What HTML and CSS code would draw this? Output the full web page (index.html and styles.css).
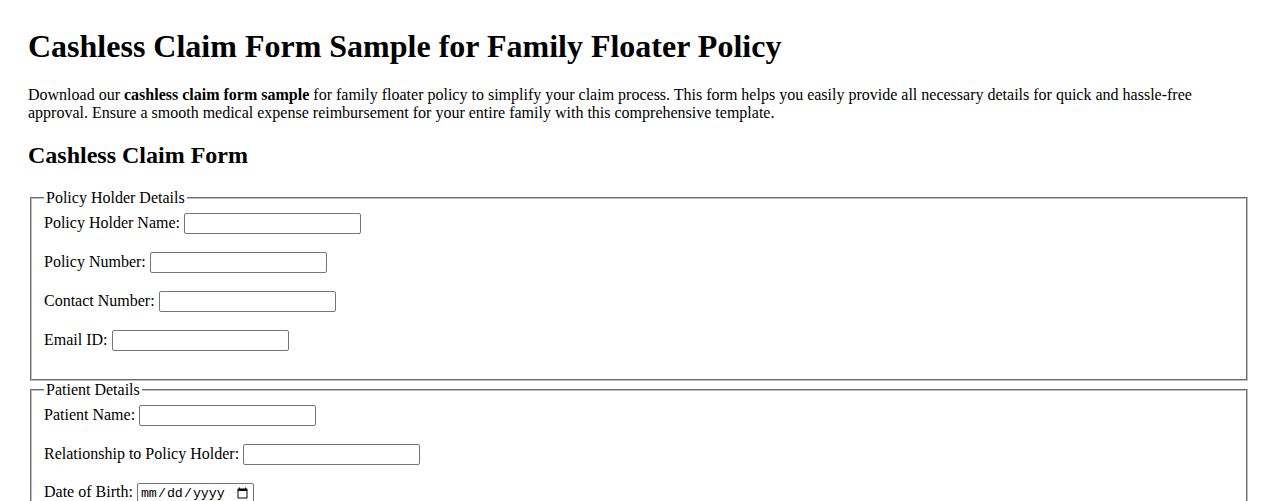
FILE: index.html
```html
<!DOCTYPE html>
<html lang="en">
<head>
<meta charset="utf-8">
<title>Cashless Claim Form Sample for Family Floater Policy</title>
<link rel="stylesheet" href="styles.css">
</head>
<body>
<h1 class="title">Cashless Claim Form Sample for Family Floater Policy</h1>
<p class="intro">Download our <strong>cashless claim form sample</strong> for family floater policy to simplify your claim process. This form helps you easily provide all necessary details for quick and hassle-free approval. Ensure a smooth medical expense reimbursement for your entire family with this comprehensive template.</p>
<h2 class="subtitle">Cashless Claim Form</h2>
<form class="claim-form">
  <fieldset class="group">
    <legend class="group-title">Policy Holder Details</legend>
    <div class="field"><label for="ph-name">Policy Holder Name:</label> <input class="text-input" type="text" id="ph-name"></div>
    <div class="field"><label for="ph-number">Policy Number:</label> <input class="text-input" type="text" id="ph-number"></div>
    <div class="field"><label for="ph-contact">Contact Number:</label> <input class="text-input" type="text" id="ph-contact"></div>
    <div class="field"><label for="ph-email">Email ID:</label> <input class="text-input" type="text" id="ph-email"></div>
  </fieldset>
  <fieldset class="group">
    <legend class="group-title">Patient Details</legend>
    <div class="field"><label for="pt-name">Patient Name:</label> <input class="text-input" type="text" id="pt-name"></div>
    <div class="field"><label for="pt-rel">Relationship to Policy Holder:</label> <input class="text-input" type="text" id="pt-rel"></div>
    <div class="field"><label for="pt-dob">Date of Birth:</label> <input class="date-input" type="date" id="pt-dob"></div>
    <div class="field"><label for="pt-gender">Gender:</label> <input class="text-input" type="text" id="pt-gender"></div>
  </fieldset>
  <fieldset class="group">
    <legend class="group-title">Hospital Details</legend>
    <div class="field"><label for="h-name">Hospital Name:</label> <input class="text-input" type="text" id="h-name"></div>
    <div class="field"><label for="h-date">Date of Admission:</label> <input class="date-input" type="date" id="h-date"></div>
  </fieldset>
</form>
</body>
</html>
```
FILE: styles.css
```css
html {
  background: #ffffff;
}
body {
  margin: 8px;
  padding: 20px;
  font-family: "Liberation Serif", "Times New Roman", serif;
  font-size: 16px;
  color: #000000;
}
.title {
  font-size: 32px;
  font-weight: bold;
  margin: 0 0 21px;
}
.intro {
  margin: 16px 0;
}
.subtitle {
  font-size: 24px;
  font-weight: bold;
  margin: 20px 0;
}
.claim-form {
  margin: 0;
}
.group {
  margin: 0 2px;
  padding: 6px 12px 10px;
  border: 2px groove #c0c0c0;
}
.group-title {
  padding: 0 2px;
}
.field {
  margin: 0 0 18px;
}
.text-input {
  box-sizing: border-box;
  width: 177px;
  height: 21px;
  border: 1px solid #767676;
  border-radius: 2px;
  padding: 1px 2px;
  font-family: "Liberation Sans", Arial, sans-serif;
  font-size: 13.333px;
  vertical-align: baseline;
}
.date-input {
  box-sizing: border-box;
  width: 117px;
  height: 21px;
  border: 1px solid #767676;
  border-radius: 2px;
  padding: 1px 2px;
  font-family: "Liberation Mono", "Courier New", monospace;
  font-size: 13.333px;
}
```
